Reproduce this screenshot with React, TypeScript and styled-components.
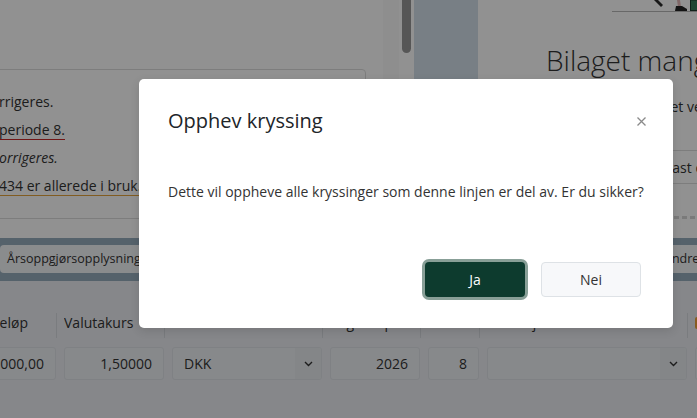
import React from "react";
import styled, { createGlobalStyle } from "styled-components";

const GlobalStyle = createGlobalStyle`
  html, body { margin: 0; padding: 0; width: 100%; height: 100%; overflow: hidden; }
  body {
    font-family: "Open Sans", "Noto Sans", "Liberation Sans", sans-serif;
    color: #333;
    background: #fff;
  }
  #root { width: 100%; height: 100%; }
  *, *::before, *::after { box-sizing: border-box; }
`;

const Page = styled.div`
  position: relative;
  width: 100vw;
  height: 100vh;
  display: grid;
  grid-template-rows: 238px 43px 1fr;
  overflow: hidden;
`;

/* ---------- top section ---------- */
const TopSection = styled.div`
  display: flex;
  min-width: 0;
  overflow: hidden;
`;

const LeftPanel = styled.section`
  flex: none;
  width: 383px;
  padding: 69px 17px 0 0;
  background: #fff;
  overflow: hidden;
`;

const MessageBox = styled.div`
  margin-left: -20px;
  height: 150px;
  border: 1px solid #dcdcdc;
  border-radius: 4px;
  padding: 18px 12px 18px 18px;
`;

const MessageLine = styled.div<{ $italic?: boolean }>`
  white-space: nowrap;
  font-size: 14px;
  line-height: 28px;
  color: #333;
  font-style: ${(p) => (p.$italic ? "italic" : "normal")};
`;

const Flagged = styled.span<{ $tone: string }>`
  border-bottom: 1px solid ${(p) => p.$tone};
`;

const Gutter = styled.div`
  flex: none;
  width: 16px;
  background: #f9f9f9;
`;

const ScrollTrack = styled.div`
  flex: none;
  width: 15px;
  padding: 0 3px;
  background: #fff;
`;

const ScrollThumb = styled.div`
  height: 53px;
  border-radius: 0 0 5px 5px;
  background: #989898;
`;

const ViewerStrip = styled.div`
  flex: none;
  width: 64px;
  background: #d3dfea;
`;

const RightPanel = styled.section`
  flex: 1;
  min-width: 0;
  padding-left: 68px;
  background: #fff;
  overflow: hidden;
`;

const Illustration = styled.svg`
  display: block;
  margin-left: 66px;
`;

const Heading = styled.h1`
  margin: 31px 0 0;
  font-size: 28px;
  line-height: 35px;
  font-weight: 300;
  color: #333;
  white-space: nowrap;
`;

const Lead = styled.p`
  margin: 19px 0 0;
  font-size: 14px;
  line-height: 20px;
  text-indent: -5px;
  color: #333;
  white-space: nowrap;
`;

const UploadButton = styled.div`
  display: flex;
  align-items: center;
  width: max-content;
  height: 34px;
  margin: 33px 0 0 106px;
  padding: 0 12px;
  border: 1px solid #dcdcdc;
  border-radius: 4px;
  font-size: 14px;
  color: #333;
  white-space: nowrap;
`;

const DashedRule = styled.div`
  margin-top: 32px;
  height: 3px;
  background: repeating-linear-gradient(90deg, #d6d6d6 0 5px, transparent 5px 8px);
`;

/* ---------- tab band ---------- */
const TabBand = styled.nav`
  display: grid;
  grid-template-columns: 657px max-content;
  padding: 7px 0;
  background: #96adbd;
  overflow: hidden;
`;

const Chip = styled.div`
  width: max-content;
  height: 28px;
  padding: 0 7px;
  border-radius: 4px;
  background: #f3f6f8;
  font-size: 12.5px;
  line-height: 28px;
  color: #333;
  white-space: nowrap;
`;

/* ---------- table ---------- */
const TableSection = styled.section`
  padding-top: 32px;
  background: #ebeef2;
  overflow: hidden;
`;

const LineGrid = styled.div`
  display: grid;
  grid-template-columns: 107px 101px 151px 91px 52px 201px 160px;
  column-gap: 7px;
  row-gap: 9px;
  margin-left: -50px;
`;

const HeaderCell = styled.div`
  height: 25px;
  line-height: 19px;
  font-size: 14px;
  color: #333;
  border-right: 1px solid #d6dadf;
  white-space: nowrap;
  overflow: hidden;
`;

const Marker = styled.span`
  display: inline-block;
  width: 10px;
  height: 12px;
  margin-top: 4px;
  border-radius: 2px;
  vertical-align: top;
  background: #eda03a;
`;

const Field = styled.div<{ $align?: "left" | "right" }>`
  width: calc(100% - 1px);
  height: 33px;
  padding: 0 11px;
  border: 1px solid #dfe3e8;
  border-radius: 3px;
  background: #eef1f5;
  font-size: 14px;
  line-height: 31px;
  color: #333;
  text-align: ${(p) => p.$align ?? "right"};
  white-space: nowrap;
  overflow: hidden;
`;

const SelectField = styled.div`
  display: flex;
  width: calc(100% - 1px);
  height: 33px;
  border: 1px solid #dfe3e8;
  border-radius: 3px;
  background: #eef1f5;
  overflow: hidden;
`;

const SelectValue = styled.div`
  flex: 1;
  padding-left: 11px;
  font-size: 14px;
  line-height: 31px;
  color: #333;
`;

const SelectAddon = styled.div`
  flex: none;
  width: 26px;
  display: flex;
  align-items: center;
  justify-content: center;
  background: #e9ecf0;
`;

/* ---------- modal ---------- */
const Overlay = styled.div`
  position: absolute;
  inset: 0;
  padding: 79px 0 0 139px;
  background: rgba(0, 0, 0, 0.43);
`;

const Modal = styled.div`
  display: flex;
  flex-direction: column;
  width: 534px;
  height: 249px;
  border-radius: 5px;
  background: #fff;
  box-shadow: 0 3px 10px rgba(0, 0, 0, 0.12);
`;

const ModalHeader = styled.header`
  display: flex;
  align-items: center;
  justify-content: space-between;
  padding: 28px 27px 28px 29px;
`;

const ModalTitle = styled.h2`
  margin: 0;
  font-size: 20px;
  line-height: 28px;
  font-weight: 400;
  color: #212529;
`;

const CloseButton = styled.button`
  display: flex;
  padding: 0;
  border: 0;
  background: none;
  cursor: pointer;
`;

const ModalBody = styled.div`
  padding: 19px 29px 0;
  font-size: 14px;
  line-height: 20px;
  color: #333;
`;

const ModalFooter = styled.footer`
  display: flex;
  justify-content: flex-end;
  gap: 16px;
  margin-top: auto;
  padding: 0 32px 31px;
`;

const DialogButton = styled.button<{ $primary?: boolean }>`
  width: 100px;
  height: 35px;
  border-radius: 4px;
  font-family: inherit;
  font-size: 14px;
  cursor: pointer;
  border: ${(p) => (p.$primary ? "none" : "1px solid #dee2e6")};
  background: ${(p) => (p.$primary ? "#0d3b2e" : "#f7f8fa")};
  color: ${(p) => (p.$primary ? "#fff" : "#333")};
  box-shadow: ${(p) => (p.$primary ? "0 0 0 3px #889f97" : "none")};
`;

const Chevron = () => (
  <svg width="9" height="6" viewBox="0 0 9 6" aria-hidden="true">
    <path d="M1 1l3.5 3.5L8 1" fill="none" stroke="#333" strokeWidth="1.4" />
  </svg>
);

export default function App() {
  return (
    <>
      <GlobalStyle />
      <Page>
        <TopSection>
          <LeftPanel>
            <MessageBox>
              <MessageLine>rrigeres.</MessageLine>
              <MessageLine>
                <Flagged $tone="#c62828">periode 8.</Flagged>
              </MessageLine>
              <MessageLine $italic>orrigeres.</MessageLine>
              <MessageLine>
                <Flagged $tone="#e3a33a">434 er allerede i bruk.</Flagged>
              </MessageLine>
            </MessageBox>
          </LeftPanel>
          <Gutter />
          <ScrollTrack>
            <ScrollThumb />
          </ScrollTrack>
          <ViewerStrip />
          <RightPanel>
            <Illustration width="85" height="12" viewBox="0 0 85 12" aria-hidden="true">
              <line x1="0" y1="11.5" x2="85" y2="11.5" stroke="#b8b8b8" strokeWidth="1" />
              <polygon points="42,0 46,0 51,5 49,7" fill="#2b2b2b" />
              <polygon points="65,0 68,0 69,7 66,7" fill="#e3b8b8" />
              <polygon points="64,6 70,6 75,9 75,11 63,11" fill="#222" />
              <rect x="78.5" y="0" width="8" height="10.5" fill="#3a7a58" stroke="#1e3b2d" />
            </Illustration>
            <Heading>Bilaget mangler vedlegg</Heading>
            <Lead>Her kan du legge til et vedlegg ved å laste opp en fil.</Lead>
            <UploadButton>Last opp fil</UploadButton>
            <DashedRule />
          </RightPanel>
        </TopSection>

        <TabBand>
          <Chip>Årsoppgjørsopplysninger</Chip>
          <Chip>Andre opplysninger</Chip>
        </TabBand>

        <TableSection>
          <LineGrid>
            <HeaderCell>Valutabeløp</HeaderCell>
            <HeaderCell>Valutakurs</HeaderCell>
            <HeaderCell>Valuta</HeaderCell>
            <HeaderCell>Regnskapsår</HeaderCell>
            <HeaderCell>Periode</HeaderCell>
            <HeaderCell>Kostobjekt</HeaderCell>
            <HeaderCell>
              <Marker />
            </HeaderCell>

            <Field>10.000,00</Field>
            <Field>1,50000</Field>
            <SelectField>
              <SelectValue>DKK</SelectValue>
              <SelectAddon>
                <Chevron />
              </SelectAddon>
            </SelectField>
            <Field>2026</Field>
            <Field>8</Field>
            <SelectField>
              <SelectValue />
              <SelectAddon>
                <Chevron />
              </SelectAddon>
            </SelectField>
            <Field $align="left" />
          </LineGrid>
        </TableSection>

        <Overlay>
          <Modal role="dialog" aria-modal="true">
            <ModalHeader>
              <ModalTitle>Opphev kryssing</ModalTitle>
              <CloseButton aria-label="Lukk">
                <svg width="9" height="9" viewBox="0 0 9 9" aria-hidden="true">
                  <path d="M0.5 0.5l8 8M8.5 0.5l-8 8" stroke="#8a8a8a" strokeWidth="1.3" />
                </svg>
              </CloseButton>
            </ModalHeader>
            <ModalBody>
              Dette vil oppheve alle kryssinger som denne linjen er del av. Er du sikker?
            </ModalBody>
            <ModalFooter>
              <DialogButton $primary>Ja</DialogButton>
              <DialogButton>Nei</DialogButton>
            </ModalFooter>
          </Modal>
        </Overlay>
      </Page>
    </>
  );
}
